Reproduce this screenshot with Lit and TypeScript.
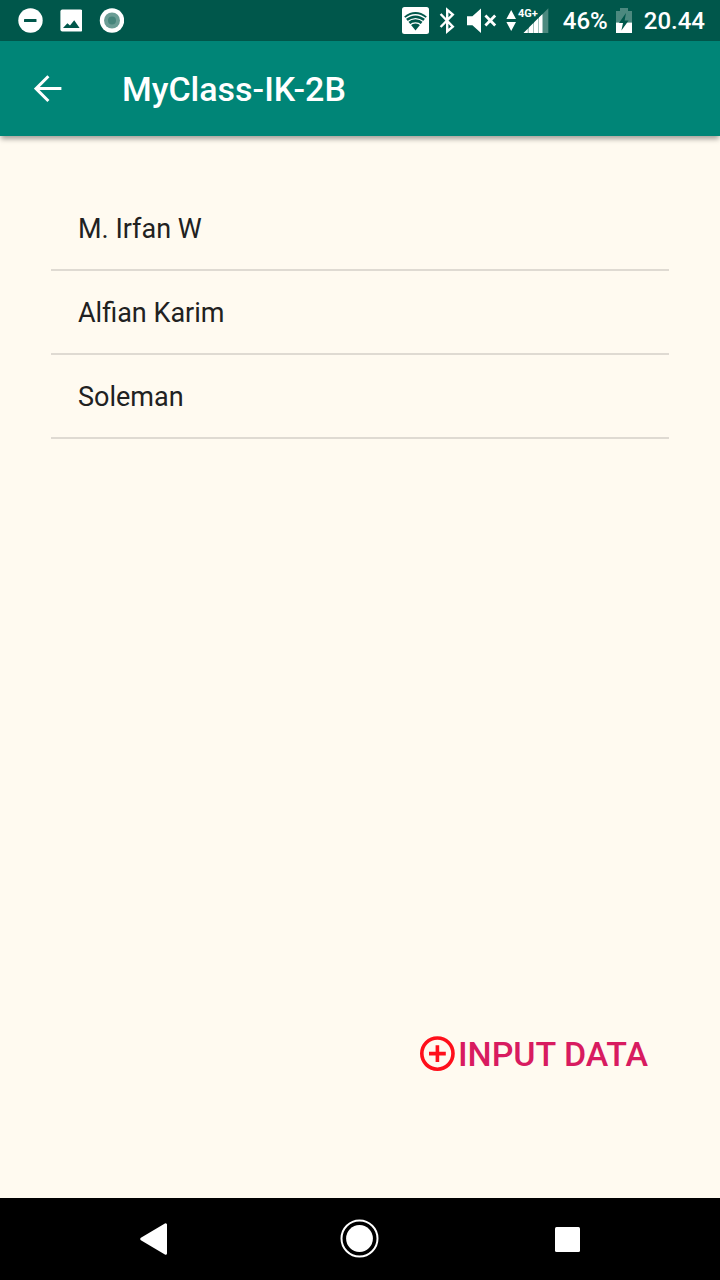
import { LitElement, html, css, svg } from "lit";
import { customElement, property } from "lit/decorators.js";

@customElement("status-bar")
export class StatusBar extends LitElement {
  static styles = css`
    :host {
      display: flex;
      justify-content: space-between;
      align-items: center;
      height: 41px;
      padding: 0 15px 0 18px;
      background: #00574b;
      color: #fff;
      font: 500 24px/41px Roboto, "Noto Sans", sans-serif;
    }
    .group {
      display: flex;
      align-items: center;
    }
    .notices {
      gap: 17px;
    }
    .system {
      gap: 8px;
    }
    .level,
    .clock {
      padding-top: 2px;
      line-height: 39px;
    }
    .level {
      margin-left: 6px;
    }
    .clock {
      margin-left: 4px;
    }
    svg {
      display: block;
      fill: #fff;
    }
  `;

  render() {
    return html`
      <div class="group notices">
        <svg width="25" height="41" viewBox="0 0 25 41" aria-hidden="true">
          <circle cx="12.5" cy="20.5" r="12.2" />
          <rect x="6" y="19" width="12.5" height="3" rx="0.6" fill="#00574b" />
        </svg>
        <svg width="22" height="41" viewBox="0 0 22 41" aria-hidden="true">
          <rect x="0.4" y="9.4" width="22" height="22.2" rx="2" />
          <path d="M3 28 7.4 23.2 10 25.6 14.2 20.2 19.6 28Z" fill="#00574b" />
        </svg>
        <svg width="25" height="41" viewBox="0 0 25 41" aria-hidden="true">
          <circle cx="13" cy="20.5" r="12.2" />
          <circle cx="13" cy="20.5" r="8" fill="#6b9d95" />
          <circle cx="13" cy="20.5" r="4" fill="#46857b" />
        </svg>
      </div>
      <div class="group system">
        <svg width="27" height="41" viewBox="0 0 27 41" aria-hidden="true">
          <rect x="0" y="7" width="27" height="27" rx="2.5" />
          <path d="M2.2 16.4Q13.5 7.6 24.8 16.4L13.5 30.4Z" fill="#00574b" />
          <g fill="none" stroke="#fff" stroke-width="1.4">
            <path d="M3 18.8Q13.5 10.6 24 18.8" />
            <path d="M5 22Q13.5 15.2 22 22" />
            <path d="M7.6 25.2Q13.5 20.6 19.4 25.2" />
          </g>
        </svg>
        <svg width="22" height="41" viewBox="0 0 22 41" aria-hidden="true">
          <path
            d="M3.6 14 15.8 26.6 10.2 31.4V9.8L15.8 14.6 3.6 27"
            fill="none"
            stroke="#fff"
            stroke-width="2.4"
          />
        </svg>
        <svg width="31" height="41" viewBox="0 0 31 41" aria-hidden="true">
          <path d="M0 16.2H5.4L14 8.4V33L5.4 25.2H0Z" />
          <path d="M18.4 15.6 28.2 25.4M28.2 15.6 18.4 25.4" stroke="#fff" stroke-width="2.8" />
        </svg>
        <svg width="43" height="41" viewBox="0 0 43 41" role="img" aria-label="4G+ signal">
          <path d="M0.4 19 5.2 10 10 19Z M0.4 22 10 22 5.2 31Z" />
          <text x="12" y="16.5" font-size="11" font-weight="700">4G+</text>
          <path d="M17.6 33 42.3 8.3V33Z" fill="#4c897f" />
          <path d="M17.6 33 36.4 14.2V33Z" fill="#a6c4bf" />
          ${[
            [17.6, 4],
            [23, 4],
            [28, 4],
            [33, 3.4],
          ].map(
            ([x, w]) => svg`<path d="M${x} 33V${50.6 - x}L${x + w} ${50.6 - x - w}V33Z" />`
          )}
        </svg>
        <span class="level">46%</span>
        <svg width="16" height="41" viewBox="0 0 16 41" aria-hidden="true">
          <path d="M0 11H4V8H12V11H16V22.5H0Z" fill="#4c897f" />
          <path d="M0 22.5H16V33H0Z" />
          <path d="M10 13 3 23H7L5.4 30.6 12.6 20.4H8.6Z" fill="#00574b" />
        </svg>
        <span class="clock">20.44</span>
      </div>
    `;
  }
}

@customElement("app-bar")
export class AppBar extends LitElement {
  @property() heading = "";

  static styles = css`
    :host {
      display: flex;
      align-items: center;
      gap: 27px;
      height: 95px;
      background: #008577;
      color: #fff;
      box-shadow: 0 4px 5px -1px rgba(0, 0, 0, 0.36);
    }
    .back {
      display: grid;
      place-items: center;
      width: 95px;
      height: 95px;
      padding: 0;
      border: 0;
      background: none;
    }
    .title {
      margin: 0;
      font: 500 34px/40px Roboto, "Noto Sans", sans-serif;
    }
  `;

  render() {
    return html`
      <button class="back" aria-label="Navigate up">
        <svg width="28" height="28" viewBox="0 0 28 28" fill="none" stroke="#fff" stroke-width="3">
          <path d="M27.4 13.6H3M14.4 1.2 2 13.6 14.4 26" />
        </svg>
      </button>
      <h1 class="title">${this.heading}</h1>
    `;
  }
}

@customElement("nav-bar")
export class NavBar extends LitElement {
  static styles = css`
    :host {
      display: flex;
      justify-content: center;
      height: 82px;
      background: #000;
    }
    button {
      display: grid;
      place-items: center;
      width: 207px;
      padding: 0;
      border: 0;
      background: none;
    }
    svg {
      fill: #fff;
    }
  `;

  render() {
    return html`
      <button aria-label="Back">
        <svg width="40" height="40" viewBox="0 0 40 40">
          <path d="M8.6 20 32.6 5.6V34.4Z" stroke="#fff" stroke-width="2.8" stroke-linejoin="round" />
        </svg>
      </button>
      <button aria-label="Home">
        <svg width="40" height="40" viewBox="0 0 40 40">
          <circle cx="19.5" cy="19.5" r="18" fill="none" stroke="#fff" stroke-width="2" />
          <circle cx="19.5" cy="19.5" r="13.4" />
        </svg>
      </button>
      <button aria-label="Overview">
        <svg width="40" height="40" viewBox="0 0 40 40">
          <rect x="8" y="8" width="25" height="25" rx="1.5" />
        </svg>
      </button>
    `;
  }
}

@customElement("app-root")
export class AppRoot extends LitElement {
  @property({ attribute: false }) students = ["M. Irfan W", "Alfian Karim", "Soleman"];

  static styles = css`
    :host {
      display: flex;
      flex-direction: column;
      min-height: 100vh;
      background: #fffaf0;
      color: #212121;
      font-family: Roboto, "Noto Sans", sans-serif;
    }
    .content {
      flex: 1;
      display: flex;
      flex-direction: column;
      justify-content: space-between;
      padding: 51px 51px 119px;
    }
    .students {
      margin: 0;
      padding: 0;
      list-style: none;
    }
    .student {
      padding: 2px 27px 0;
      border-bottom: 2px solid #dfdad2;
      font-size: 27px;
      line-height: 80px;
    }
    .add {
      display: flex;
      align-items: center;
      align-self: flex-end;
      gap: 2px;
      margin-right: 21px;
      padding: 0;
      border: 0;
      background: none;
      color: #d81b60;
      font: 500 34px/50px Roboto, "Noto Sans", sans-serif;
    }
  `;

  render() {
    return html`
      <status-bar></status-bar>
      <app-bar heading="MyClass-IK-2B"></app-bar>
      <main class="content">
        <ul class="students">
          ${this.students.map((name) => html`<li class="student">${name}</li>`)}
        </ul>
        <button class="add">
          <svg width="36" height="36" viewBox="0 0 36 36" fill="none" stroke="#ff0f1b" stroke-width="3.6" aria-hidden="true">
            <circle cx="17.4" cy="17.6" r="15.6" />
            <path d="M17.4 9.2V26M9 17.6H25.8" />
          </svg>
          INPUT DATA
        </button>
      </main>
      <nav-bar></nav-bar>
    `;
  }
}
